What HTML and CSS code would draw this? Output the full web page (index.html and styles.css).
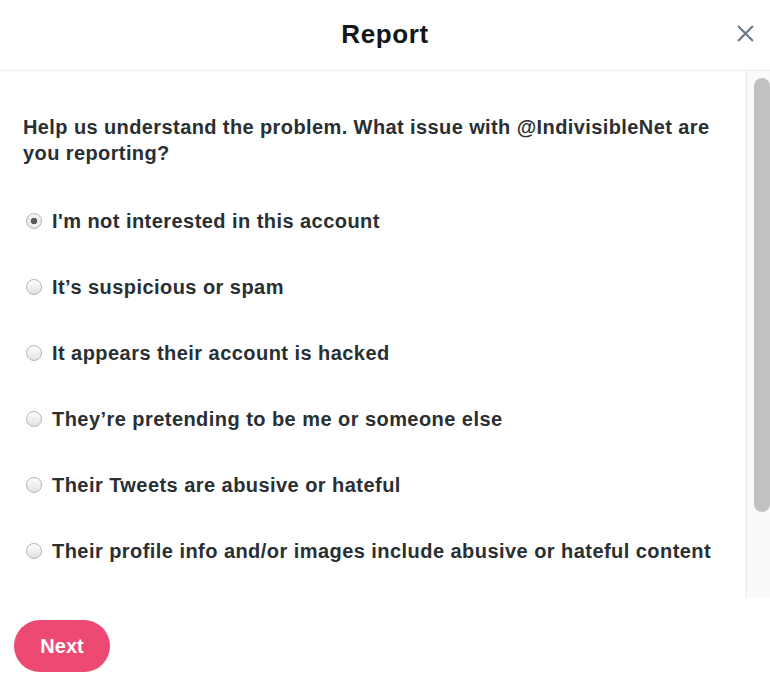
FILE: index.html
```html
<!DOCTYPE html>
<html lang="en">
<head>
<meta charset="utf-8">
<title>Report</title>
<link rel="stylesheet" href="styles.css">
</head>
<body>
<div class="dialog">
  <header class="dialog-header">
    <h1 class="dialog-title">Report</h1>
    <button class="close-btn" aria-label="Close">
      <svg viewBox="0 0 16 16" width="17" height="17"><path d="M1 1L15 15M15 1L1 15" stroke="#657786" stroke-width="2" fill="none" stroke-linecap="butt"/></svg>
    </button>
  </header>
  <div class="dialog-body">
    <div class="content">
      <p class="question">Help us understand the problem. What issue with @IndivisibleNet are you reporting?</p>
      <form class="options">
        <label class="option"><input type="radio" name="r" checked><span>I'm not interested in this account</span></label>
        <label class="option"><input type="radio" name="r"><span>It’s suspicious or spam</span></label>
        <label class="option"><input type="radio" name="r"><span>It appears their account is hacked</span></label>
        <label class="option"><input type="radio" name="r"><span>They’re pretending to be me or someone else</span></label>
        <label class="option"><input type="radio" name="r"><span>Their Tweets are abusive or hateful</span></label>
        <label class="option"><input type="radio" name="r"><span>Their profile info and/or images include abusive or hateful content</span></label>
      </form>
    </div>
    <div class="scrollbar" aria-hidden="true"><div class="scroll-thumb"></div></div>
  </div>
  <footer class="dialog-footer">
    <button class="next-btn">Next</button>
  </footer>
</div>
</body>
</html>
```

FILE: styles.css
```css
* { box-sizing: border-box; }
html, body { margin: 0; padding: 0; background: #fff; }
body {
  font-family: "Liberation Sans", Arial, sans-serif;
  color: #292f33;
}
.dialog {
  width: 770px;
  height: 690px;
  display: flex;
  flex-direction: column;
  overflow: hidden;
}
.dialog-header {
  height: 71px;
  flex: none;
  border-bottom: 1px solid #e6ecf0;
  display: flex;
  align-items: center;
  justify-content: center;
  position: relative;
}
.dialog-title {
  margin: 0;
  font-size: 26px;
  letter-spacing: 0.6px;
  font-weight: 700;
  color: #14171a;
  padding-bottom: 1px;
}
.close-btn {
  position: absolute;
  right: 16px;
  top: 25px;
  width: 17px;
  height: 17px;
  padding: 0;
  border: 0;
  background: none;
  display: flex;
}
.dialog-body {
  height: 527px;
  flex: none;
  display: flex;
  overflow: hidden;
}
.content {
  flex: 1;
  min-width: 0;
  padding: 43px 10px 0 23px;
}
.scrollbar {
  width: 24px;
  flex: none;
  background: #fafafa;
  border-left: 1px solid #e8e8e8;
  padding: 7px 0 0 7px;
}
.scroll-thumb {
  height: 434px;
  background: #c1c1c1;
  border-radius: 8px;
}
.question {
  margin: 0 0 22px;
  font-size: 20px;
  letter-spacing: 0.4px;
  line-height: 26px;
  font-weight: 700;
}
.options {
  display: flex;
  flex-direction: column;
}
.option {
  height: 66px;
  display: flex;
  align-items: center;
  gap: 10px;
  padding-left: 3px;
  font-size: 20px;
  letter-spacing: 0.45px;
  font-weight: 700;
  line-height: 26px;
  white-space: nowrap;
}
.option input {
  appearance: none;
  -webkit-appearance: none;
  margin: 0;
  width: 16px;
  height: 16px;
  flex: none;
  border-radius: 50%;
  border: 1px solid #b4b4b4;
  background: linear-gradient(#fcfcfc, #e2e2e2);
  box-shadow: inset 0 1px 1px rgba(255,255,255,0.8);
}
.option input:checked {
  background: radial-gradient(circle, #5a5a5a 0, #5a5a5a 3px, #f2f2f2 3.6px, #e0e0e0 100%);
}
.dialog-footer {
  flex: 1;
  padding: 22px 14px 0;
}
.next-btn {
  width: 96px;
  height: 52px;
  border: 0;
  border-radius: 26px;
  background: #ec4a73;
  color: #fff;
  font-family: "Liberation Sans", Arial, sans-serif;
  font-size: 20px;
  font-weight: 700;
  padding: 0;
}
```
